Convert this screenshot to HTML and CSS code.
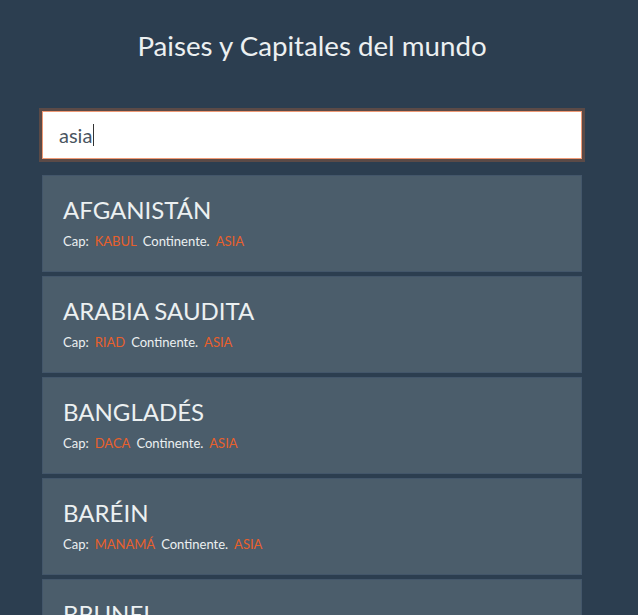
FILE: index.html
```html
<!DOCTYPE html>
<html lang="es">
<head>
<meta charset="utf-8">
<title>Paises y Capitales del mundo</title>
<link rel="stylesheet" href="styles.css">
</head>
<body>
<div class="app">
  <h1 class="title">Paises y Capitales del mundo</h1>
  <div class="search"><span class="search-text">asia</span><span class="caret"></span></div>
  <ul class="list">
    <li class="card">
      <h2 class="name">AFGANISTÁN</h2>
      <p class="info"><span>Cap:</span> <span class="hl">KABUL</span> <span>Continente.</span> <span class="hl">ASIA</span></p>
    </li>
    <li class="card">
      <h2 class="name">ARABIA SAUDITA</h2>
      <p class="info"><span>Cap:</span> <span class="hl">RIAD</span> <span>Continente.</span> <span class="hl">ASIA</span></p>
    </li>
    <li class="card">
      <h2 class="name">BANGLADÉS</h2>
      <p class="info"><span>Cap:</span> <span class="hl">DACA</span> <span>Continente.</span> <span class="hl">ASIA</span></p>
    </li>
    <li class="card">
      <h2 class="name">BARÉIN</h2>
      <p class="info"><span>Cap:</span> <span class="hl">MANAMÁ</span> <span>Continente.</span> <span class="hl">ASIA</span></p>
    </li>
    <li class="card">
      <h2 class="name">BRUNEI</h2>
      <p class="info"><span>Cap:</span> <span class="hl">BANDAR SERI BEGAWAN</span> <span>Continente.</span> <span class="hl">ASIA</span></p>
    </li>
  </ul>
</div>
</body>
</html>
```
FILE: styles.css
```css
html, body {
  margin: 0;
  padding: 0;
  background: #2c3e50;
  height: 100%;
  overflow: hidden;
}
body {
  font-family: Lato, "Open Sans", sans-serif;
  color: #ecf0f1;
}
.app {
  width: 540px;
  margin-left: 42px;
  padding-top: 28px;
}
.title {
  margin: 0 0 48px 0;
  font-size: 27.7px;
  font-weight: 400;
  text-align: center;
  line-height: 35px;
}
.search {
  box-sizing: border-box;
  height: 48px;
  background: #fff;
  border: 1px solid #ef9a76;
  outline: 3px solid #5b4a47;
  display: flex;
  align-items: center;
  padding-left: 16px;
  margin-bottom: 16px;
}
.search-text {
  font-size: 20px;
  color: #4a5561;
}
.caret {
  display: inline-block;
  width: 1px;
  height: 22px;
  background: #333;
  margin-left: 1px;
}
.list {
  list-style: none;
  margin: 0;
  padding: 0;
  display: flex;
  flex-direction: column;
  gap: 4px;
}
.card {
  box-sizing: border-box;
  height: 97px;
  background: #4b5d6b;
  border: 1px solid #43566a;
  padding: 19px 20px 0 20px;
}
.name {
  margin: 0 0 9px 0;
  font-size: 24px;
  font-weight: 400;
  line-height: 29px;
  color: #ecf0f1;
}
.info {
  margin: 0;
  font-size: 13px;
  line-height: 16px;
  display: flex;
  gap: 6px;
}
.hl {
  color: #e8602c;
}
```
